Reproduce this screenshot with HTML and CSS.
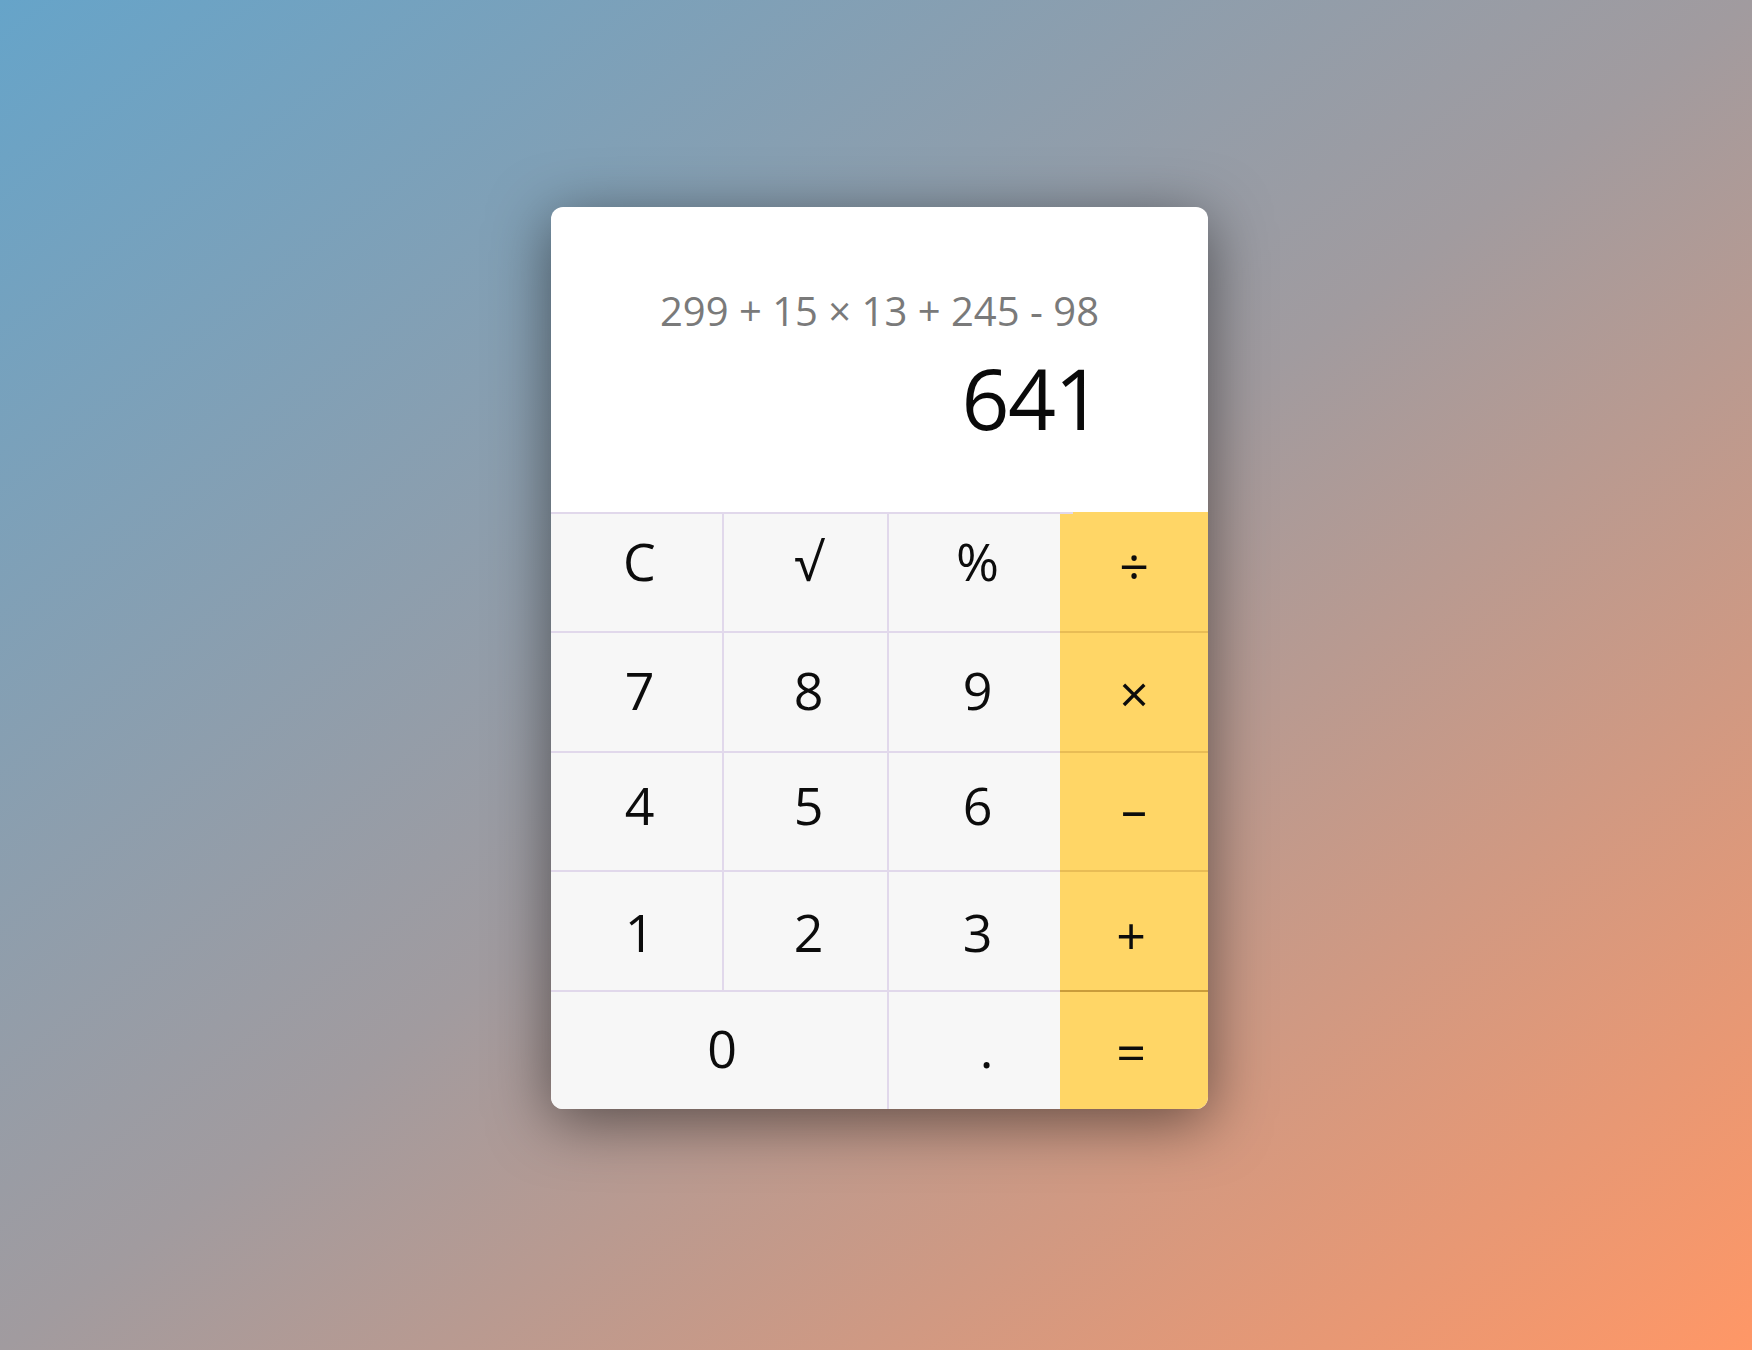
FILE: index.html
```html
<!DOCTYPE html>
<html lang="en">
<head>
<meta charset="utf-8">
<title>Calculator</title>
<link rel="stylesheet" href="styles.css">
</head>
<body>
<main class="stage">
  <section class="calc">
    <div class="display">
      <div class="expr">299 + 15 × 13 + 245 - 98</div>
      <div class="result">641</div>
    </div>
    <div class="keys">
      <button class="key top">C</button>
      <button class="key top">√</button>
      <button class="key top">%</button>
      <button class="key top op op-first">÷</button>
      <button class="key">7</button>
      <button class="key">8</button>
      <button class="key">9</button>
      <button class="key op">×</button>
      <button class="key mid">4</button>
      <button class="key mid">5</button>
      <button class="key mid">6</button>
      <button class="key mid op">–</button>
      <button class="key low">1</button>
      <button class="key low">2</button>
      <button class="key low">3</button>
      <button class="key low op op-narrow">+</button>
      <button class="key zero">0</button>
      <button class="key dot">.</button>
      <button class="key op op-narrow eq">=</button>
    </div>
  </section>
</main>
</body>
</html>
```

FILE: styles.css
```css
html, body {
  margin: 0;
  padding: 0;
  height: 100%;
}

body {
  background: linear-gradient(to bottom right, #66a4c9 0%, #a19b9f 50%, #ff9766 100%);
  font-family: "Open Sans", "Noto Sans", sans-serif;
}

.stage {
  height: 100%;
  box-sizing: border-box;
  display: flex;
  align-items: flex-start;
  justify-content: flex-start;
  padding: 207px 0 0 551px;
}

.calc {
  width: 657px;
  height: 902px;
  background: #ffffff;
  border-radius: 12px;
  overflow: hidden;
  box-shadow: 0 12px 60px rgba(0, 0, 0, 0.5);
  display: flex;
  flex-direction: column;
}

.display {
  height: 305px;
  box-sizing: border-box;
  padding-top: 76px;
  display: flex;
  flex-direction: column;
  align-items: flex-end;
}

.expr {
  font-size: 40px;
  color: #7a7a7a;
  padding-right: 109px;
  white-space: nowrap;
}

.result {
  font-size: 84px;
  color: #0a0a0a;
  padding-right: 107px;
  margin-top: 2px;
  letter-spacing: -1.5px;
}

.keys {
  flex: 1;
  display: grid;
  grid-template-columns: 173px 165px 171px 148px;
  grid-template-rows: repeat(5, 1fr);
  position: relative;
}

.keys::before {
  content: "";
  position: absolute;
  left: 0;
  top: 0;
  width: 522px;
  height: 2px;
  background: #e1d8eb;
  z-index: 1;
}

.key {
  appearance: none;
  margin: 0;
  padding: 0 0 6px 6px;
  border: 0;
  border-top: 2px solid #e1d8eb;
  border-right: 2px solid #e1d8eb;
  background: #f7f7f7;
  font-family: "Open Sans", "Noto Sans", sans-serif;
  font-size: 52px;
  color: #0c0c0c;
  display: flex;
  align-items: center;
  justify-content: center;
}

.key:nth-child(4n + 3) {
  border-right: 0;
}

.top {
  padding-bottom: 24px;
}

.mid {
  padding-bottom: 14px;
}

.low {
  padding-bottom: 0;
  padding-top: 2px;
}

.zero {
  grid-column: span 2;
}

.dot {
  border-right: 0;
  padding-left: 24px;
}

.op {
  background: #ffd666;
  border-right: 0;
  border-top: 2px solid #e8bc55;
  padding-left: 0;
  padding-top: 6px;
}

.op.top {
  padding-top: 8px;
}

.op.mid {
  padding-top: 6px;
}

.op.low {
  padding-top: 8px;
}

.op-narrow {
  padding-right: 6px;
}

.op-first {
  border-top: 2px solid #ffd666;
}

.eq {
  border-top: 2px solid #c99c3a;
}
```
